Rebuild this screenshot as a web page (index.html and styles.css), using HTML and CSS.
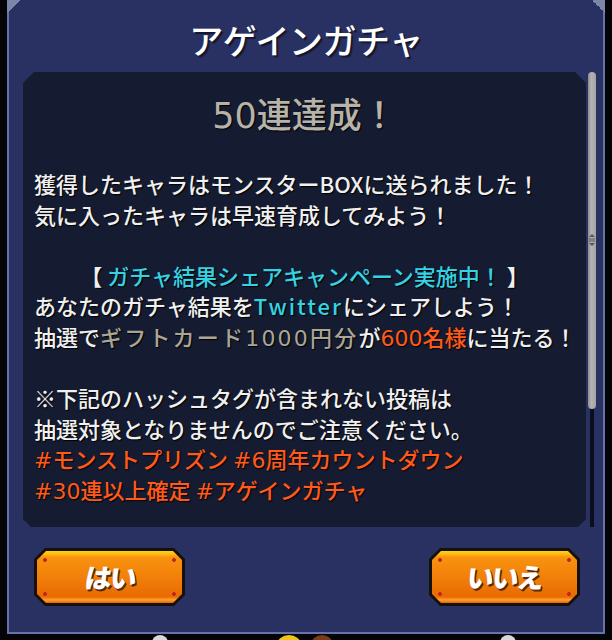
FILE: index.html
```html
<!DOCTYPE html>
<html lang="ja">
<head>
<meta charset="utf-8">
<link rel="stylesheet" href="styles.css">
</head>
<body>
<div class="panel">
  <h1 class="title">アゲインガチャ</h1>
  <div class="content-row">
    <div class="msgbox">
      <div class="heading"><span class="num">50</span>連達成！</div>
      <div class="body">
        <div class="line">獲得したキャラはモンスターBOXに送られました！</div>
        <div class="line">気に入ったキャラは早速育成してみよう！</div>
        <div class="line blank"></div>
        <div class="line center"><span class="br">【</span> <span class="cyan">ガチャ結果シェアキャンペーン実施中！</span> <span class="br">】</span></div>
        <div class="line">あなたのガチャ結果を<span class="cyan latin">Twitter</span>にシェアしよう！</div>
        <div class="line">抽選で<span class="tan">ギフトカード<span class="num">1000</span>円分</span>が<span class="orange"><span class="num">600</span>名様</span>に当たる！</div>
        <div class="line blank"></div>
        <div class="line">※下記のハッシュタグが含まれない投稿は</div>
        <div class="line">抽選対象となりませんのでご注意ください。</div>
        <div class="line orange"><span class="num">#</span>モンストプリズン <span class="num">#6</span>周年カウントダウン</div>
        <div class="line orange"><span class="num">#30</span>連以上確定 <span class="num">#</span>アゲインガチャ</div>
      </div>
    </div>
    <div class="scrollbar">
      <div class="thumb">
        <svg class="grip" width="6" height="12" viewBox="0 0 6 12">
          <path d="M3 0 L6 3 L0 3 Z" fill="#555"/>
          <rect x="0" y="4.5" width="6" height="1" fill="#555"/>
          <rect x="0" y="6.5" width="6" height="1" fill="#555"/>
          <path d="M0 9 L6 9 L3 12 Z" fill="#555"/>
        </svg>
      </div>
    </div>
  </div>
  <div class="buttons">
    <div class="btn"><div class="btn-face"><span class="btn-label">はい</span></div></div>
    <div class="btn"><div class="btn-face"><span class="btn-label">いいえ</span></div></div>
  </div>
</div>
<div class="footer">
  <span class="dot dot-white dot-a"></span>
  <span class="dot dot-yellow"></span>
  <span class="dot dot-brown"></span>
  <span class="dot dot-white dot-b"></span>
</div>
</body>
</html>
```
FILE: styles.css
```css
html, body {
  margin: 0;
  padding: 0;
}
body {
  width: 612px;
  height: 640px;
  overflow: hidden;
  background: #050507;
  font-family: "Noto Sans CJK JP", "Noto Sans", sans-serif;
}
.panel {
  position: relative;
  box-sizing: border-box;
  margin: 0 7px;
  height: 634px;
  border: 2px solid #6673aa;
  border-top: none;
  background: #293163;
  display: flex;
  flex-direction: column;
}
.panel::before,
.panel::after {
  content: "";
  position: absolute;
  width: 13px;
  height: 13px;
}
.panel::before {
  left: -2px;
  top: 0;
  background: linear-gradient(135deg, #7c86a8 50%, transparent 50%);
}
.panel::after {
  right: -2px;
  top: 0;
  background: linear-gradient(225deg, #7c86a8 50%, transparent 50%);
}
.title {
  margin: 0;
  height: 72px;
  box-sizing: border-box;
  padding-top: 17px;
  text-align: center;
  font-size: 34px;
  line-height: 46px;
  font-weight: 500;
  color: #ffffff;
  letter-spacing: -0.5px;
  text-shadow: 2px 2px 1px #14182e;
}
.content-row {
  display: flex;
  margin-left: 14px;
  height: 455px;
}
.msgbox {
  width: 563px;
  height: 455px;
  box-sizing: border-box;
  background: #151b30;
  clip-path: polygon(11px 0, calc(100% - 11px) 0, 100% 11px, 100% calc(100% - 8px), calc(100% - 8px) 100%, 8px 100%, 0 calc(100% - 8px), 0 11px);
  padding: 18px 0 0 11px;
}
.heading {
  text-align: center;
  padding-right: 11px;
  font-size: 35px;
  line-height: 46px;
  font-weight: 500;
  color: #b7b3a9;
  text-shadow: 1px 1px 1px #000;
  margin-bottom: 29px;
}
.body {
  color: #f0f0f0;
  font-size: 22px;
  font-weight: 500;
  text-shadow: 1px 1px 1px #000;
}
.line {
  height: 30.6px;
  line-height: 30.6px;
  white-space: nowrap;
}
.num {
  font-family: "DejaVu Sans", "Noto Sans CJK JP", sans-serif;
  font-weight: 400;
}
.latin {
  letter-spacing: 2px;
}
.center {
  text-align: center;
  padding-right: 11px;
}
.br {
  font-weight: 700;
}
.cyan { color: #35d2e4; }
.tan { color: #aaa596; letter-spacing: 2.2px; }
.orange { color: #ff5a1c; }
.scrollbar {
  position: relative;
  width: 8px;
  margin-left: 2px;
  height: 455px;
  display: flex;
  justify-content: center;
  background: linear-gradient(90deg, transparent 2px, #0b0e1c 2px, #0b0e1c 6px, transparent 6px);
}
.thumb {
  width: 8px;
  height: 337px;
  border-radius: 4px;
  background: linear-gradient(90deg, #8d8d8d, #b4b4b4 40%, #a2a2a2);
  display: flex;
  align-items: center;
  justify-content: center;
}
.grip {
  display: block;
  margin-top: -2px;
}
.buttons {
  display: flex;
  justify-content: space-between;
  padding: 21px 23px 0 25px;
}
.btn {
  width: 151px;
  height: 58px;
  box-sizing: border-box;
  padding: 3px;
  background: #16100a;
  clip-path: polygon(11px 0, calc(100% - 11px) 0, 100% 11px, 100% calc(100% - 11px), calc(100% - 11px) 100%, 11px 100%, 0 calc(100% - 11px), 0 11px);
}
.btn-face {
  height: 100%;
  box-sizing: border-box;
  clip-path: polygon(9px 0, calc(100% - 9px) 0, 100% 9px, 100% calc(100% - 9px), calc(100% - 9px) 100%, 9px 100%, 0 calc(100% - 9px), 0 9px);
  background:
    radial-gradient(circle at 8px 9px, #c2281a 1.6px, transparent 2.2px),
    radial-gradient(circle at calc(100% - 8px) 9px, #c2281a 1.6px, transparent 2.2px),
    radial-gradient(circle at 8px calc(100% - 9px), #c2281a 1.6px, transparent 2.2px),
    radial-gradient(circle at calc(100% - 8px) calc(100% - 9px), #c2281a 1.6px, transparent 2.2px),
    linear-gradient(180deg, #ffd21a 0, #ffb210 4px, #f8930f 6px, #f2800a 50%, #e96a02 88%, #ffa030 94%, #e86400 100%);
  display: flex;
  align-items: center;
  justify-content: center;
}
.btn-label {
  display: inline-block;
  color: #ffffff;
  font-size: 27px;
  font-weight: 900;
  letter-spacing: -2px;
  transform: skewX(-8deg);
  text-shadow: 2px 2px 0 #5a2a08, 1px 1px 0 #3a1a04;
  margin-top: -2px;
}
.footer {
  position: relative;
  height: 6px;
  overflow: hidden;
}
.dot {
  position: absolute;
  top: 1px;
  border-radius: 50%;
}
.dot-white { width: 16px; height: 16px; background: #d8d8d8; }
.dot-a { left: 152px; }
.dot-b { left: 500px; }
.dot-yellow { left: 277px; width: 24px; height: 20px; background: #f1c419; }
.dot-brown { left: 311px; width: 22px; height: 20px; background: #7a3b1a; }
```
